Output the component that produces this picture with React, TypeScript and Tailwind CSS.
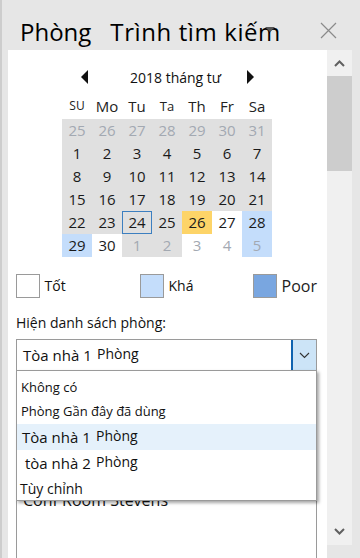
import React from 'react';

type Cell = { d: number; bg: string; muted?: boolean; today?: boolean };

const G = 'bg-[#e0e0e0]';
const W = 'bg-white';
const B = 'bg-[#c4ddfb]';
const Y = 'bg-[#fdd468]';

const rows: Cell[][] = [
  [25, 26, 27, 28, 29, 30, 31].map(d => ({ d, bg: G, muted: true })),
  [1, 2, 3, 4, 5, 6, 7].map(d => ({ d, bg: G })),
  [8, 9, 10, 11, 12, 13, 14].map(d => ({ d, bg: G })),
  [15, 16, 17, 18, 19, 20, 21].map(d => ({ d, bg: G })),
  [
    { d: 22, bg: G },
    { d: 23, bg: G },
    { d: 24, bg: G, today: true },
    { d: 25, bg: G },
    { d: 26, bg: Y },
    { d: 27, bg: W },
    { d: 28, bg: B },
  ],
  [
    { d: 29, bg: B },
    { d: 30, bg: W },
    { d: 1, bg: G, muted: true },
    { d: 2, bg: G, muted: true },
    { d: 3, bg: W, muted: true },
    { d: 4, bg: W, muted: true },
    { d: 5, bg: B, muted: true },
  ],
];

const days = [
  { t: 'SU', cls: 'text-[12px] pt-[3px]' },
  { t: 'Mo', cls: 'text-[15px]' },
  { t: 'Tu', cls: 'text-[15px]' },
  { t: 'Ta', cls: 'text-[13px] pt-[3px]' },
  { t: 'Th', cls: 'text-[15px]' },
  { t: 'Fr', cls: 'text-[15px]' },
  { t: 'Sa', cls: 'text-[15px]' },
];

const font = { fontFamily: '"Open Sans", "Noto Sans", sans-serif' };

function RoomRow({ a, hl, ml }: { a: string; hl?: boolean; ml?: string }) {
  return (
    <div className={`flex h-[26px] items-center ${hl ? 'bg-[#e5f1fb]' : ''}`}>
      <span className={`w-[79px] text-[15px] text-[#111] ${ml ?? 'pl-[5px]'}`}>{a}</span>
      <span className="-mt-[3px] text-[14px] text-[#111]">Phòng</span>
    </div>
  );
}

export default function App() {
  return (
    <div
      className="relative flex h-[558px] w-[360px] flex-col overflow-hidden border-l-2 border-[#cdcdcd] bg-[#e6e6e6]"
      style={font}
    >
      {/* title bar */}
      <div className="relative flex h-[56px] items-center pl-[18px] pt-[14px] text-[24px] text-black">
        <span>Phòng</span>
        <span className="ml-[19px] tracking-[0.6px]">Trình tìm kiếm</span>
        <span className="absolute left-[263px] top-[27px] z-10 h-0 w-0 border-x-[5px] border-t-[5px] border-x-transparent border-t-[#555]" />
        <svg className="absolute left-[318px] top-[22px]" width="17" height="17" viewBox="0 0 17 17">
          <path d="M1 1 L16 16 M16 1 L1 16" stroke="#8a8a8a" strokeWidth="1.2" />
        </svg>
      </div>

      <div className="flex flex-1">
        {/* panel */}
        <div className="ml-[6px] flex w-[319px] flex-col bg-white pl-[8px] pr-[10px] pt-[17px]">
          <div className="ml-[46px] w-[210px]">
            <div className="relative flex h-[20px] items-center">
              <span className="ml-[19px] h-0 w-0 border-y-[7px] border-r-[7px] border-y-transparent border-r-[#111]" />
              <span className="ml-[42px] text-[14px] text-[#111]">2018 tháng tư</span>
              <span className="absolute left-[185px] top-[3px] h-0 w-0 border-y-[7px] border-l-[7px] border-y-transparent border-l-[#111]" />
            </div>
            <div className="grid h-[32px] grid-cols-7 items-end pb-[3px]">
              {days.map(d => (
                <div key={d.t} className={`text-center leading-[20px] text-[#222] ${d.cls}`}>
                  {d.t}
                </div>
              ))}
            </div>
            <div className="grid grid-cols-7">
              {rows.flat().map((c, i) => (
                <div
                  key={i}
                  className={`flex h-[23px] items-center justify-center text-[15px] ${c.bg} ${
                    c.muted ? 'text-[#a3a9b2]' : 'text-[#1a1a1a]'
                  } ${c.today ? 'border border-[#3c7fc0]' : ''}`}
                >
                  {c.d}
                </div>
              ))}
            </div>
          </div>

          {/* legend */}
          <div className="mt-[17px] flex items-center">
            <div className="h-[24px] w-[24px] border border-[#9a9a9a] bg-white" />
            <span className="ml-[5px] -mt-[2px] w-[97px] text-[14px] text-[#111]">Tốt</span>
            <div className="h-[24px] w-[24px] border border-[#9a9a9a] bg-[#c4ddfb]" />
            <span className="ml-[5px] -mt-[2px] w-[86px] text-[14px] text-[#111]">Khá</span>
            <div className="h-[24px] w-[24px] border border-[#9a9a9a] bg-[#79a6e0]" />
            <span className="ml-[5px] text-[16px] text-[#222]">Poor</span>
          </div>

          <div className="mt-[14px] text-[14px] text-[#111]">Hiện danh sách phòng:</div>

          {/* select */}
          <div className="relative mt-[6px]">
            <div className="flex h-[32px] border border-[#9a9a9a]">
              <span className="flex flex-1 items-center">
                <span className="w-[80px] pl-[6px] text-[15px] text-[#111]">Tòa nhà 1</span>
                <span className="-mt-[3px] text-[14px] text-[#111]">Phòng</span>
              </span>
              <span className="flex w-[25px] items-center justify-center border-l-2 border-[#0f63b0] bg-[#cce4f7]">
                <svg width="11" height="7" viewBox="0 0 11 7">
                  <path d="M1 1 L5.5 5.5 L10 1" stroke="#333" strokeWidth="1.1" fill="none" />
                </svg>
              </span>
            </div>
            {/* list box behind */}
            <div className="h-[190px] border-x border-[#9a9a9a] pl-[6px] pt-[117px]">
              <div className="text-[16px] text-[#111]">Conf Room Stevens</div>
            </div>

            {/* dropdown */}
            <div className="absolute left-0 right-0 top-[31px] border border-[#9a9a9a] bg-white pt-[5px] shadow-[2px_2px_3px_rgba(0,0,0,0.35)]">
              <div className="flex h-[24px] items-center pl-[4px] text-[13px] text-[#111]">Không có</div>
              <div className="flex h-[24px] items-center pl-[4px] text-[13px] text-[#111]">Phòng Gần đây đã dùng</div>
              <RoomRow a="Tòa nhà 1" hl />
              <RoomRow a="tòa nhà 2" ml="pl-[8px]" />
              <div className="flex h-[24px] items-center pl-[3px] text-[14px] text-[#111]">Tùy chỉnh</div>
            </div>
          </div>
        </div>

        {/* scrollbar */}
        <div className="flex h-[495px] w-[25px] flex-col bg-[#f0f0f0]">
          <div className="flex h-[26px] items-center justify-center">
            <svg width="11" height="7" viewBox="0 0 11 7">
              <path d="M1 6 L5.5 1.5 L10 6" stroke="#606060" strokeWidth="2" fill="none" />
            </svg>
          </div>
          <div className="h-[95px] bg-[#cdcdcd]" />
          <div className="flex-1" />
          <div className="flex h-[28px] items-center justify-center">
            <svg width="11" height="7" viewBox="0 0 11 7">
              <path d="M1 1 L5.5 5.5 L10 1" stroke="#606060" strokeWidth="2" fill="none" />
            </svg>
          </div>
        </div>
      </div>
    </div>
  );
}
